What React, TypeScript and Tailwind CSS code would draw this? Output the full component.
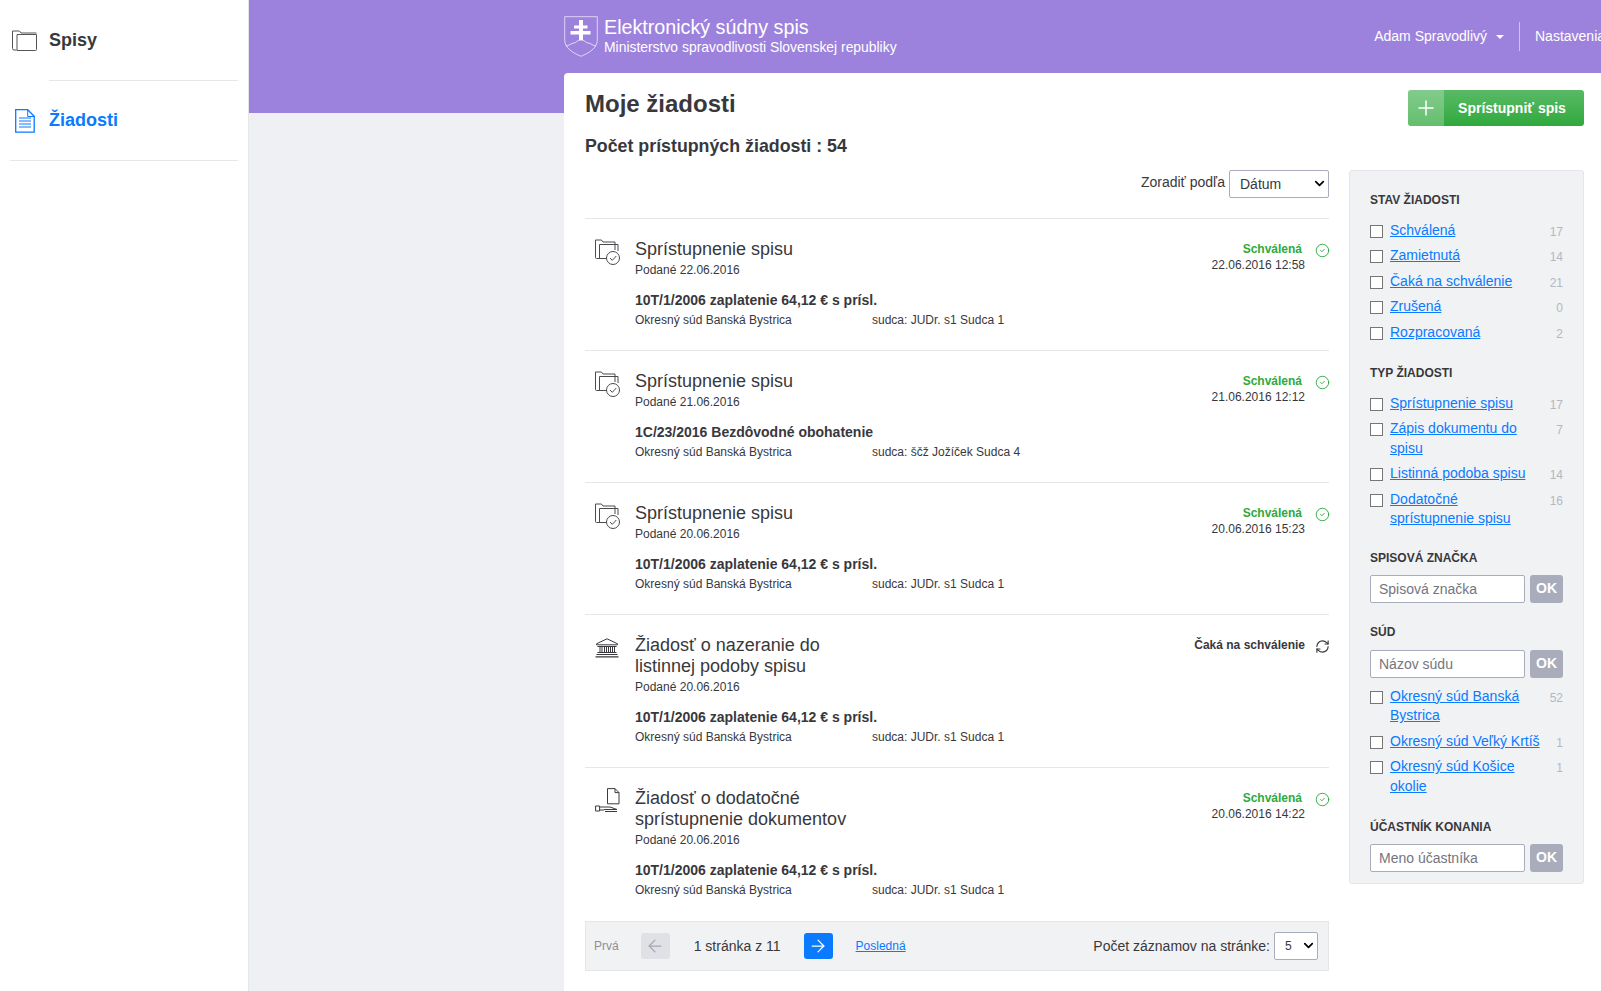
import * as React from 'react';
import { ArrowLeft, ArrowRight, ChevronDown, CircleCheck, Plus, RefreshCw } from 'lucide-react';

type FilterItem = { label: string; count: number };

const stavItems: FilterItem[] = [
  { label: 'Schválená', count: 17 },
  { label: 'Zamietnutá', count: 14 },
  { label: 'Čaká na schválenie', count: 21 },
  { label: 'Zrušená', count: 0 },
  { label: 'Rozpracovaná', count: 2 },
];

const typItems: FilterItem[] = [
  { label: 'Sprístupnenie spisu', count: 17 },
  { label: 'Zápis dokumentu do spisu', count: 7 },
  { label: 'Listinná podoba spisu', count: 14 },
  { label: 'Dodatočné sprístupnenie spisu', count: 16 },
];

const sudItems: FilterItem[] = [
  { label: 'Okresný súd Banská Bystrica', count: 52 },
  { label: 'Okresný súd Veľký Krtíš', count: 1 },
  { label: 'Okresný súd Košice okolie', count: 1 },
];

const FolderCheckIcon = () => (
  <svg width="26" height="27" viewBox="0 0 26 27" fill="none" stroke="#4a4a50" strokeWidth="1">
    <path d="M12 19.500H1.500a1 1 0 0 1-1-1V1h6L8 3h12v8" />
    <path d="M4.500 19V5.500H23V12" />
    <circle cx="18" cy="19" r="6.500" fill="#fff" />
    <path d="M15 19l2.300 2.300 4-4.300" />
  </svg>
);

const BankIcon = () => (
  <svg className="mt-[3px]" width="24" height="20" viewBox="0 0 24 20" fill="none" stroke="#3a3a3e" strokeWidth="1">
    <path d="M12 .8 1.500 5.800v1h21v-1z" />
    <path d="M2.500 8.500h19M2.500 14.500h19" />
    <path d="M5 9v5M7 9v5M9.500 9v5M11.500 9v5M13.500 9v5M15.500 9v5M17.500 9v5M19.500 9v5" />
    <path d="M1.500 16.500h21M.5 18.800h23" strokeWidth="1.200" />
  </svg>
);

const HandDocIcon = () => (
  <svg width="25" height="25" viewBox="0 0 25 25" fill="none" stroke="#3a3a3e" strokeWidth="1">
    <path d="M12.500 15.800V.6H20l4 4v11.200z" />
    <path d="M20 .6v4h4" />
    <path d="M.6 18h4v5h-4zM4.600 19H15l7 2.500H9M4.600 22H9M10 23.500h12" />
  </svg>
);

const CourtShield = () => (
  <svg width="34" height="41" viewBox="0 0 34 41" fill="none">
    <path d="M.7.7h32.600V24c0 8-8.300 13-16.300 16.300C9 37 .7 32 .7 24z" stroke="#fff" strokeOpacity="0.65" />
    <path d="M15 4h4v5.500h4.500v3H19V15h7.500v3.500H19V24h-4v-5.500H6.500V15H15v-2.500h-5v-3h5z" fill="#fff" />
    <path d="M2 30c3 0 5-3 8-3 2 0 3-3 7-3s5 3 7 3c3 0 5 3 8 3" stroke="#fff" strokeOpacity="0.7" />
  </svg>
);

const FilterHeading = ({ children, className }: { children: React.ReactNode; className: string }) => (
  <h3 className={`text-[12px] font-bold uppercase leading-[14px] text-[#38383c] ${className}`}>{children}</h3>
);

const FilterList = ({ items }: { items: FilterItem[] }) => (
  <ul className="flex flex-col gap-[5.9px]">
    {items.map((item) => (
      <li key={item.label} className="flex items-start">
        <span className="mt-[4px] h-[13px] w-[13px] shrink-0 border border-[#767676] bg-white" />
        <a href="#" className="ml-[7px] w-[150px] text-[14px] leading-[19.6px] text-[#0a7aff] underline">
          {item.label}
        </a>
        <span className="ml-auto h-[19px] text-[12px] leading-[22px] text-[#b4b6c2]">{item.count}</span>
      </li>
    ))}
  </ul>
);

const FilterInput = ({ placeholder }: { placeholder: string }) => (
  <div className="flex gap-[5px]">
    <input
      placeholder={placeholder}
      className="h-[28px] w-[155px] rounded-[2px] border border-[#a9adbb] bg-white px-[8px] text-[14px] outline-none placeholder:text-[#75757d]"
    />
    <button className="h-[28px] w-[33px] rounded-[3px] bg-[#a9adbb] text-[14px] font-bold text-white">OK</button>
  </div>
);

type Request = {
  icon: React.ReactNode;
  title: string;
  podane: string;
  subject: string;
  judge: string;
  status: string;
  statusDate?: string;
  approved: boolean;
};

const requests: Request[] = [
  {
    icon: <FolderCheckIcon />,
    title: 'Sprístupnenie spisu',
    podane: '22.06.2016',
    subject: '10T/1/2006 zaplatenie 64,12 € s prísl.',
    judge: 'sudca: JUDr. s1 Sudca 1',
    status: 'Schválená',
    statusDate: '22.06.2016 12:58',
    approved: true,
  },
  {
    icon: <FolderCheckIcon />,
    title: 'Sprístupnenie spisu',
    podane: '21.06.2016',
    subject: '1C/23/2016 Bezdôvodné obohatenie',
    judge: 'sudca: ščž Jožíček Sudca 4',
    status: 'Schválená',
    statusDate: '21.06.2016 12:12',
    approved: true,
  },
  {
    icon: <FolderCheckIcon />,
    title: 'Sprístupnenie spisu',
    podane: '20.06.2016',
    subject: '10T/1/2006 zaplatenie 64,12 € s prísl.',
    judge: 'sudca: JUDr. s1 Sudca 1',
    status: 'Schválená',
    statusDate: '20.06.2016 15:23',
    approved: true,
  },
  {
    icon: <BankIcon />,
    title: 'Žiadosť o nazeranie do listinnej podoby spisu',
    podane: '20.06.2016',
    subject: '10T/1/2006 zaplatenie 64,12 € s prísl.',
    judge: 'sudca: JUDr. s1 Sudca 1',
    status: 'Čaká na schválenie',
    approved: false,
  },
  {
    icon: <HandDocIcon />,
    title: 'Žiadosť o dodatočné sprístupnenie dokumentov',
    podane: '20.06.2016',
    subject: '10T/1/2006 zaplatenie 64,12 € s prísl.',
    judge: 'sudca: JUDr. s1 Sudca 1',
    status: 'Schválená',
    statusDate: '20.06.2016 14:22',
    approved: true,
  },
];

const RequestRow = ({ request }: { request: Request }) => (
  <div className="flex border-t border-[#e5e6ea] pb-[21px] pl-[10px] pt-[20px]">
    <div className="w-[40px] shrink-0">{request.icon}</div>
    <div className="flex-1">
      <div className="flex justify-between">
        <div className="w-[240px]">
          <h2 className="text-[18px] leading-[21px] text-[#38383c]">{request.title}</h2>
          <p className="mt-[1px] text-[12px] leading-[18px] text-[#38383c]">Podané {request.podane}</p>
        </div>
        <div className="flex items-start pt-[2px]">
          <div className="flex flex-col items-end">
            {request.approved ? (
              <span className="pr-[3px] text-[12px] font-bold leading-[16px] text-[#2eaa3e]">{request.status}</span>
            ) : (
              <span className="text-[12px] font-bold leading-[16px] text-[#38383c]">{request.status}</span>
            )}
            {request.statusDate && (
              <span className="mt-[1px] text-[12px] leading-[14px] text-[#38383c]">{request.statusDate}</span>
            )}
          </div>
          <div className="ml-[10px] w-[14px] pt-[2px]">
            {request.approved ? (
              <CircleCheck size={15} strokeWidth={1.5} className="text-[#2eaa3e]" />
            ) : (
              <RefreshCw size={15} strokeWidth={1.8} className="text-[#38383c]" />
            )}
          </div>
        </div>
      </div>
      <p className="mt-[11px] text-[14px] font-bold leading-[20px] text-[#38383c]">{request.subject}</p>
      <div className="mt-[1px] flex text-[12px] leading-[18px] text-[#38383c]">
        <span className="w-[237px]">Okresný súd Banská Bystrica</span>
        <span>{request.judge}</span>
      </div>
    </div>
  </div>
);

export default function App() {
  return (
    <div
      className="flex h-[991px] w-[1601px] overflow-hidden bg-[#eff0f4] text-[#38383c]"
      style={{ fontFamily: '"Liberation Sans", Arial, sans-serif' }}
    >
      <aside className="w-[249px] shrink-0 border-r border-[#e5e6ea] bg-white pl-[10px] pr-[10px]">
        <div className="relative ml-[39px] flex h-[81px] items-center border-b border-[#e5e6ea]">
          <svg className="absolute left-[-37px] top-[30px]" width="25" height="21" viewBox="0 0 25 21" fill="none" stroke="#555559" strokeWidth="1">
            <path d="M4.500 20H2a1.500 1.500 0 0 1-1.500-1.500V1h7l1.500 2h15.500" />
            <path d="M5 20.500h18.500a1 1 0 0 0 1-1V4.500H5z" />
          </svg>
          <span className="text-[18px] font-bold text-[#38383c]">Spisy</span>
        </div>
        <div className="relative flex h-[80px] items-center border-b border-[#e5e6ea] pl-[39px]">
          <svg className="absolute left-[5px] top-[28px]" width="20" height="24" viewBox="0 0 20 24" fill="none" stroke="#0a7aff" strokeWidth="1.300">
            <path d="M.7.7h12l6.500 6.500v16H.7z" />
            <path d="M12.700 1v6.500h6.500" strokeWidth="1" />
            <path d="M4 9h12M4 12h12M4 15h12M4 18h12" strokeWidth="1" />
          </svg>
          <span className="text-[18px] font-bold text-[#0a7aff]">Žiadosti</span>
        </div>
      </aside>

      <main className="relative flex-1">
        <div className="absolute left-0 right-0 top-0 h-[113px] bg-[#9d82dd]" />
        <div className="relative">
          <header className="flex h-[73px] items-center pl-[315px] text-white">
            <CourtShield />
            <div className="ml-[6px] flex-1 pb-[3px]">
              <div className="text-[19.7px] leading-[24px]">Elektronický súdny spis</div>
              <div className="text-[13.9px] leading-[16px]">Ministerstvo spravodlivosti Slovenskej republiky</div>
            </div>
            <div className="flex items-center whitespace-nowrap text-[14px]">
              <span>Adam Spravodlivý</span>
              <span className="ml-[9px] h-0 w-0 border-x-[4px] border-t-[4px] border-x-transparent border-t-white" />
              <span className="ml-[15px] h-[29px] border-l border-white/50" />
              <span className="ml-[15px] w-[66px] overflow-hidden">Nastavenia</span>
            </div>
          </header>

          <section className="ml-[315px] h-[918px] rounded-tl-[4px] bg-white pl-[21px] pr-[17px]">
            <div className="flex items-start justify-between pt-[17px]">
              <div>
                <h1 className="text-[24px] font-bold leading-[28px]">Moje žiadosti</h1>
                <p className="mt-[18px] text-[17.8px] font-bold leading-[20px]">Počet prístupných žiadosti : 54</p>
              </div>
              <button className="flex h-[36px] w-[176px] overflow-hidden rounded-[3px] bg-gradient-to-b from-[#58ba66] to-[#2fa93c] text-[14px] font-bold text-white">
                <span className="flex h-full w-[36px] items-center justify-center bg-white/25">
                  <Plus size={24} strokeWidth={1.5} />
                </span>
                <span className="flex-1 pr-[4px] text-center leading-[36px]">Sprístupniť spis</span>
              </button>
            </div>

            <div className="mt-[14px] flex">
              <div className="w-[744px]">
                <div className="flex h-[48px] items-start justify-end">
                  <span className="mt-[3px] text-[14px] leading-[18px]">Zoradiť podľa</span>
                  <div className="relative ml-[4px] h-[28px] w-[100px] rounded-[2px] border border-[#a9adbb] bg-white pl-[10px] text-[14px] leading-[27px]">
                    Dátum
                    <ChevronDown size={15} strokeWidth={2.8} className="absolute right-[1px] top-[5px] text-black" />
                  </div>
                </div>

                {requests.map((request, index) => (
                  <RequestRow key={`request-${index}`} request={request} />
                ))}

                <div className="mt-[1px] flex h-[50px] items-center border border-[#e5e6ea] bg-[#f1f2f4] pl-[8px] pr-[10px] text-[14px]">
                  <span className="text-[12px] text-[#8c8e96]">Prvá</span>
                  <span className="ml-[22px] flex h-[26px] w-[29px] items-center justify-center rounded-[3px] bg-[#e0e1e6]">
                    <ArrowLeft size={20} strokeWidth={1.5} className="text-[#a4a6b0]" />
                  </span>
                  <span className="ml-[24px]">1 stránka z 11</span>
                  <span className="ml-[23px] flex h-[26px] w-[29px] items-center justify-center rounded-[3px] bg-[#0a7aff]">
                    <ArrowRight size={20} strokeWidth={1.5} className="text-white" />
                  </span>
                  <a href="#" className="ml-[23px] text-[12px] text-[#0a7aff] underline">Posledná</a>
                  <span className="ml-auto">Počet záznamov na stránke:</span>
                  <div className="relative ml-[4px] h-[28px] w-[44px] rounded-[2px] border border-[#a9adbb] bg-white pl-[10px] text-[12px] leading-[27px]">
                    5
                    <ChevronDown size={15} strokeWidth={2.8} className="absolute right-[1px] top-[5px] text-black" />
                  </div>
                </div>
              </div>

              <aside className="ml-[20px] h-[714px] w-[235px] rounded-[3px] border border-[#e5e6ea] bg-[#f1f2f4] pl-[20px] pr-[20px] pt-[22px]">
                <FilterHeading className="mb-[14px]">Stav žiadosti</FilterHeading>
                <FilterList items={stavItems} />
                <FilterHeading className="mb-[14px] mt-[23px]">Typ žiadosti</FilterHeading>
                <FilterList items={typItems} />
                <FilterHeading className="mb-[10px] mt-[22px]">Spisová značka</FilterHeading>
                <FilterInput placeholder="Spisová značka" />
                <FilterHeading className="mb-[11px] mt-[22px]">Súd</FilterHeading>
                <FilterInput placeholder="Názov súdu" />
                <div className="mt-[9px]">
                  <FilterList items={sudItems} />
                </div>
                <FilterHeading className="mb-[10px] mt-[23px]">Účastník konania</FilterHeading>
                <FilterInput placeholder="Meno účastníka" />
              </aside>
            </div>
          </section>
        </div>
      </main>
    </div>
  );
}
